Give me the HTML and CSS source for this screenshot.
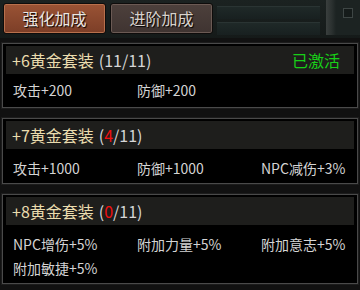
FILE: index.html
```html
<!DOCTYPE html>
<html lang="zh-CN">
<head>
    <meta charset="UTF-8">
    <title>套装加成</title>
    <link rel="stylesheet" href="styles.css">
</head>
<body>
<div class="top-bar">
    <div class="tab active">强化加成</div>
    <div class="tab">进阶加成</div>
    <div class="bar-fill">
        <div class="slot"></div>
        <div class="slot"></div>
    </div>
    <div class="bar-end">
        <span class="knob"></span>
    </div>
</div>

<div class="sets">
    <div class="set done">
        <div class="set-head">
            <span class="set-name">+6黄金套装</span>
            <span class="set-count">(11/11)</span>
            <span class="set-state">已激活</span>
        </div>
        <div class="set-body">
            <span>攻击+200</span>
            <span>防御+200</span>
        </div>
    </div>

    <div class="set">
        <div class="set-head">
            <span class="set-name">+7黄金套装</span>
            <span class="set-count">(<em>4</em>/11)</span>
        </div>
        <div class="set-body">
            <span>攻击+1000</span>
            <span>防御+1000</span>
            <span>NPC减伤+3%</span>
        </div>
    </div>

    <div class="set">
        <div class="set-head">
            <span class="set-name">+8黄金套装</span>
            <span class="set-count">(<em>0</em>/11)</span>
        </div>
        <div class="set-body">
            <span>NPC增伤+5%</span>
            <span>附加力量+5%</span>
            <span>附加意志+5%</span>
            <span>附加敏捷+5%</span>
        </div>
    </div>
</div>
</body>
</html>
```

FILE: styles.css
```css
body {
    margin: 0;
    width: 360px;
    height: 290px;
    overflow: hidden;
    background: #111111;
    font-family: "Noto Sans CJK SC", "Noto Sans", sans-serif;
    color: #d4d4d4;
}

.top-bar {
    display: flex;
    align-items: flex-start;
    height: 38px;
    padding: 3px 0 0 3px;
    box-sizing: border-box;
    background: linear-gradient(#1b2221, #151a19);
}

.tab {
    width: 103px;
    height: 31px;
    margin-right: 4px;
    box-sizing: border-box;
    border: 1px solid #0e0c0b;
    border-radius: 3px;
    box-shadow: inset 0 0 0 1px #6b5a54;
    background: linear-gradient(#4d403c, #3f3431);
    color: #d9d2cc;
    font-size: 16px;
    line-height: 29px;
    text-align: center;
    text-shadow: 1px 1px 1px #000;
}

.tab.active {
    box-shadow: inset 0 0 0 1px #b8704c;
    background: linear-gradient(#9a5335, #7c3e27);
    color: #ece6e0;
}

.bar-fill {
    flex: 1;
    display: flex;
    flex-direction: column;
    gap: 3px;
    padding: 3px 6px 0 0;
}

.slot {
    height: 12px;
    background: linear-gradient(#1f2928, #182020);
    border-top: 1px solid #2a3433;
}

.bar-end {
    width: 34px;
    height: 35px;
    margin-top: -3px;
    position: relative;
    background: linear-gradient(90deg, #3a3f3e 0, #2a302f 6px, #1c2322 10px);
}

.knob {
    position: absolute;
    left: 17px;
    top: 8px;
    width: 8px;
    height: 8px;
    border: 1px solid #3e4645;
    background: #151b1a;
}

.sets {
    display: flex;
    flex-direction: column;
    gap: 10px;
    padding: 5px 2px 0 2px;
}

.set {
    border: 1px solid #4a4a4a;
    padding: 2px 3px 0 3px;
    background: #000;
    box-shadow: 0 0 0 1px #1c1c1c;
}

.set-head {
    display: flex;
    align-items: center;
    height: 28px;
    padding: 0 14px 0 6px;
    background: #1e1e1c;
    font-size: 16px;
}

.set-name {
    color: #eadcae;
}

.set-count {
    margin-left: 5px;
    color: #d6d6d6;
}

.set-count em {
    font-style: normal;
    color: #f01010;
}

.set-state {
    margin-left: auto;
    color: #18d018;
}

.set-body {
    display: grid;
    grid-template-columns: 124px 124px 1fr;
    padding: 7px 0 3px 7px;
    font-size: 14px;
    line-height: 24px;
}

.set.done .set-body {
    padding: 4px 0 5px 7px;
}
```
